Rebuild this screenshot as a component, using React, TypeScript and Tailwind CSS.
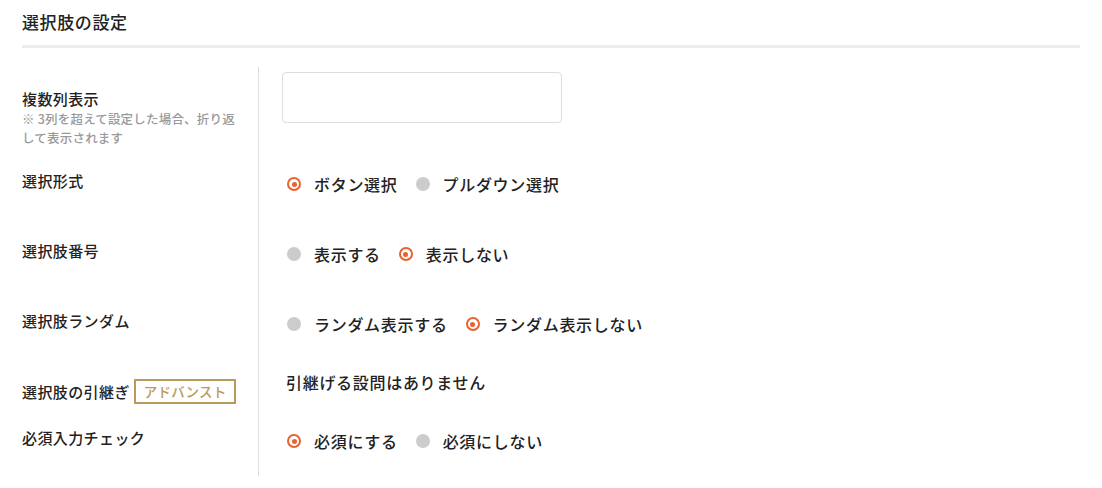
import React from "react";

const font = { fontFamily: '"Noto Sans CJK JP", "Noto Sans", sans-serif' };

function Radio({ label, checked }: { label: string; checked: boolean }) {
  return (
    <div className="flex items-center">
      {checked ? (
        <span className="ml-[5px] mr-[13px] flex h-[14px] w-[14px] items-center justify-center rounded-full border-2 border-[#e9612f]">
          <span className="h-[5px] w-[5px] rounded-full bg-[#e9612f]" />
        </span>
      ) : (
        <span className="ml-[5px] mr-[13px] h-[14px] w-[14px] rounded-full bg-[#cccccc]" />
      )}
      <span className="text-[16px] leading-[24px] font-medium tracking-[0.7px] text-[#222]">{label}</span>
    </div>
  );
}

function Radios({ items }: { items: [string, boolean][] }) {
  return (
    <div className="flex items-center gap-[13px]">
      {items.map(([l, c]) => (
        <Radio key={l} label={l} checked={c} />
      ))}
    </div>
  );
}

function Row({ label, children }: { label: React.ReactNode; children: React.ReactNode }) {
  return (
    <div className="flex h-[70px]">
      <div className="w-[236px] pt-[22px]">{label}</div>
      <div className="flex-1 border-l border-[#dddddd] pl-[23px] pt-[23px]">{children}</div>
    </div>
  );
}

const Label = ({ children }: { children: React.ReactNode }) => (
  <div className="text-[15px] leading-[20px] font-medium tracking-[0.4px] text-[#222]">{children}</div>
);

export default function App() {
  return (
    <div className="w-[1102px] h-[488px] bg-white px-[22px] pt-[9px]" style={font}>
      <div className="border-b-[3px] border-[#ececec] pb-[10px]">
        <h2 className="text-[17px] leading-[26px] font-medium tracking-[0.6px] text-[#222]">選択肢の設定</h2>
      </div>
      <div className="mt-[19px]">
        <div className="flex h-[82px]">
          <div className="w-[236px] pt-[22px]">
            <Label>複数列表示</Label>
            <div className="w-[218px] text-[12.5px] leading-[19px] font-medium text-[#999999] tracking-[0.2px]">
              ※ 3列を超えて設定した場合、折り返して表示されます
            </div>
          </div>
          <div className="flex-1 border-l border-[#dddddd] pl-[23px] pt-[5px]">
            <div className="h-[51px] w-[280px] rounded-[4px] border border-[#dddddd] bg-white" />
          </div>
        </div>
        <Row label={<Label>選択形式</Label>}>
          <Radios items={[["ボタン選択", true], ["プルダウン選択", false]]} />
        </Row>
        <Row label={<Label>選択肢番号</Label>}>
          <Radios items={[["表示する", false], ["表示しない", true]]} />
        </Row>
        <Row label={<Label>選択肢ランダム</Label>}>
          <Radios items={[["ランダム表示する", false], ["ランダム表示しない", true]]} />
        </Row>
        <div className="flex h-[47px]">
          <div className="w-[236px] pt-[20px]">
            <div className="flex h-[25px] items-center">
              <Label>選択肢の引継ぎ</Label>
              <span className="ml-[4px] flex h-[25px] items-center border-2 border-[#b99a5b] px-[8px] text-[13.5px] font-medium tracking-[0.2px] text-[#b99a5b]">
                アドバンスト
              </span>
            </div>
          </div>
          <div className="flex-1 border-l border-[#dddddd] pl-[27px] pt-[11px]">
            <div className="text-[16px] leading-[24px] font-medium tracking-[0.7px] text-[#222]">引継げる設問はありません</div>
          </div>
        </div>
        <Row label={<Label>必須入力チェック</Label>}>
          <Radios items={[["必須にする", true], ["必須にしない", false]]} />
        </Row>
      </div>
    </div>
  );
}
